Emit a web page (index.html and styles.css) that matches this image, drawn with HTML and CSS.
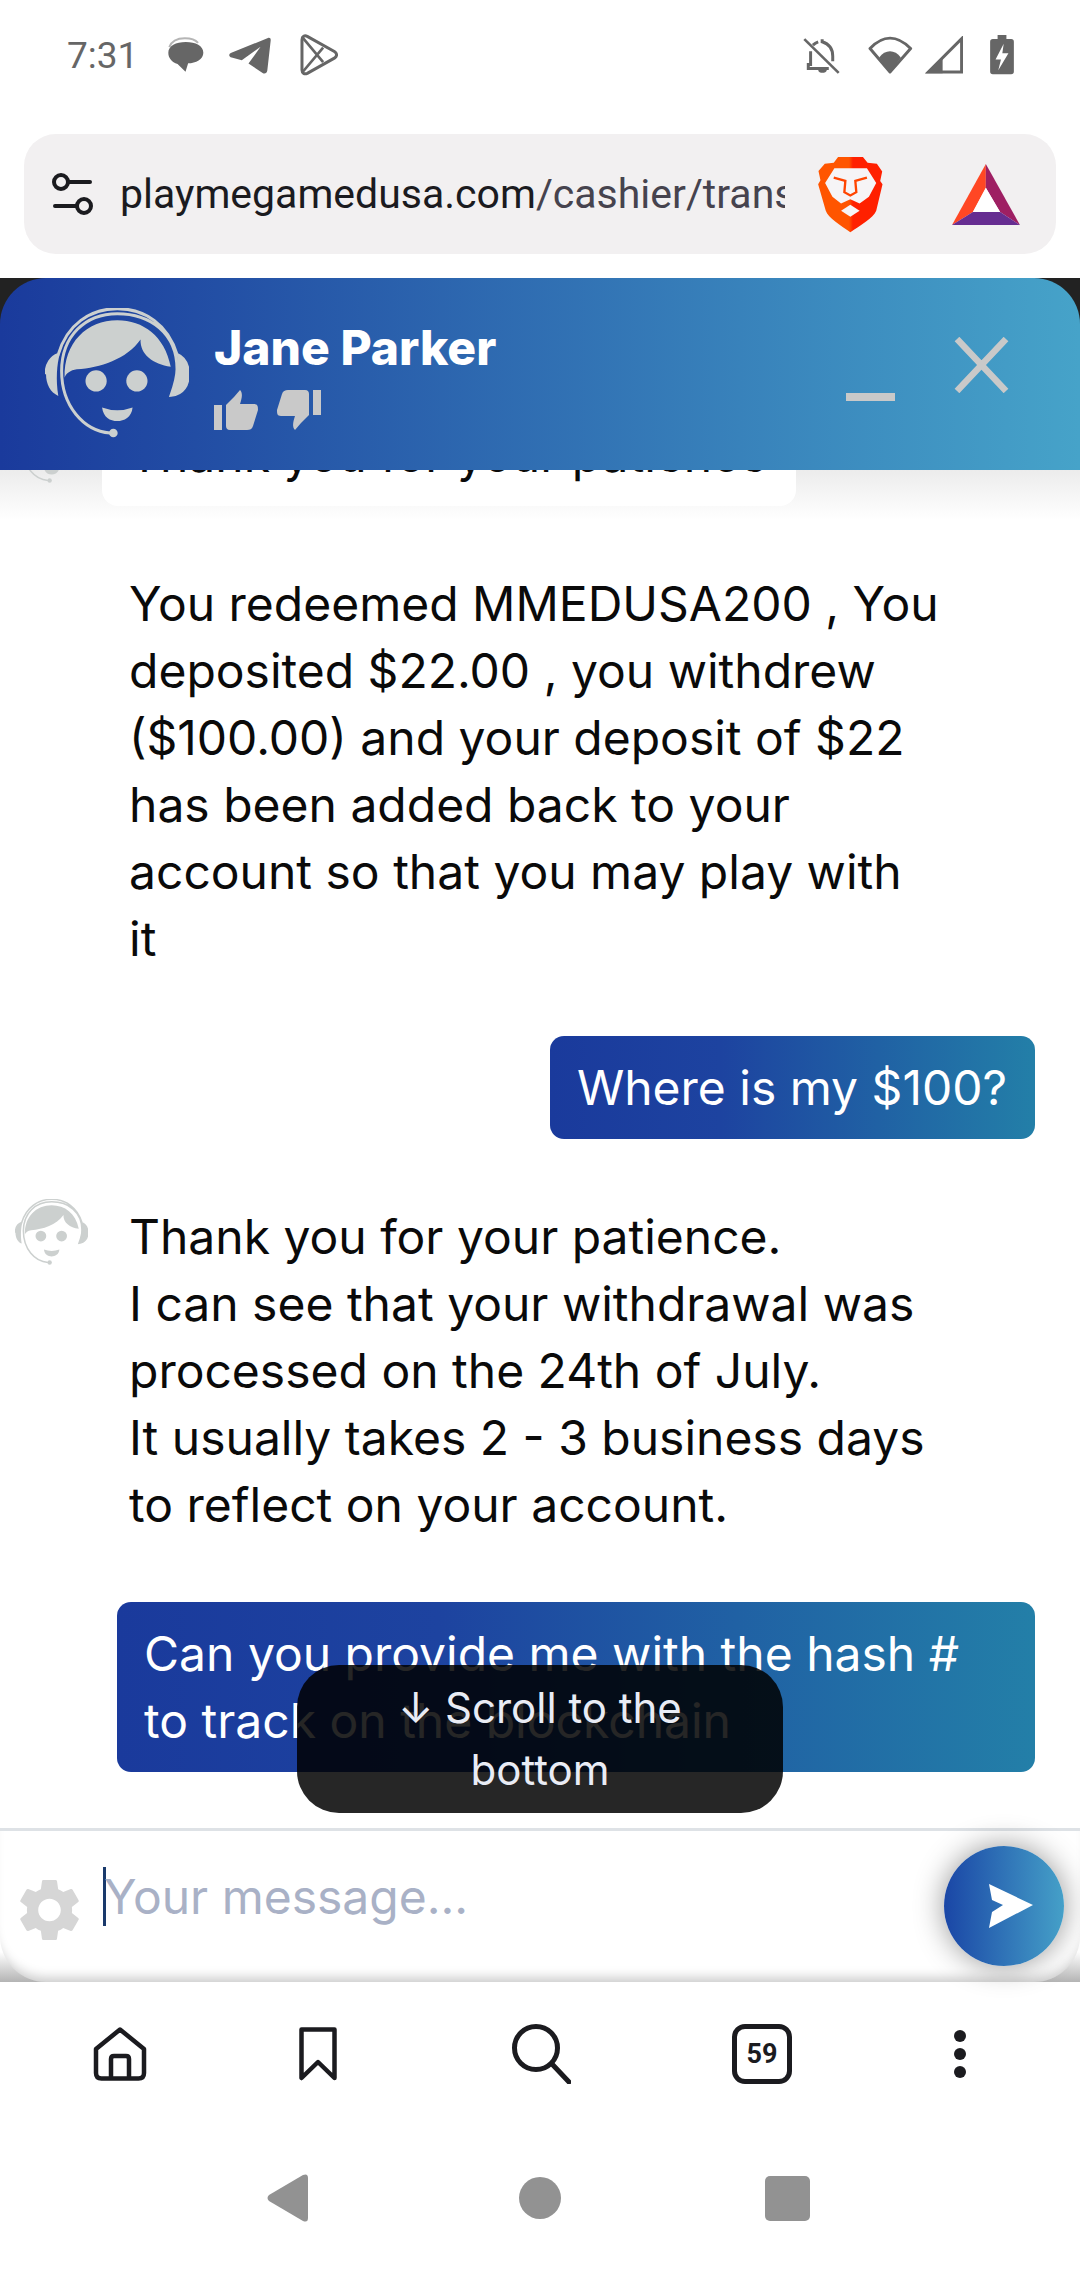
FILE: index.html
```html
<!DOCTYPE html>
<html lang="en">
<head>
    <meta charset="utf-8">
    <title>Live chat</title>
    <link rel="stylesheet" href="styles.css">
</head>
<body>

<svg class="defs" width="0" height="0">
    <symbol id="agent" viewBox="45 55 432 392">
        <path d="M47 255C47 225 62 203 84 195C110 105 180 57 262 57C345 57 415 105 442 195C465 205 476 228 476 255C476 285 462 315 424 318C436 285 442 265 442 240C442 130 360 72 262 72C165 72 94 140 94 245C94 350 160 425 240 432" fill="none" stroke="currentColor" stroke-width="9"/>
        <path d="M47 255C47 225 62 203 88 195C80 225 76 270 84 320C60 310 47 285 47 255Z" fill="currentColor"/>
        <path d="M442 195C465 205 476 228 476 255C476 285 462 315 424 318C438 280 444 235 442 195Z" fill="currentColor"/>
        <path d="M103 265C100 160 170 92 262 92C340 92 405 140 423 232C370 225 330 195 332 150C290 210 210 235 140 240C120 243 108 252 103 265Z" fill="currentColor"/>
        <circle cx="198" cy="275" r="32" fill="currentColor"/>
        <circle cx="321" cy="275" r="32" fill="currentColor"/>
        <path d="M216 355Q262 372 308 355C305 385 282 396 262 396C240 396 220 385 216 355Z" fill="currentColor"/>
        <circle cx="250" cy="432" r="13" fill="currentColor"/>
    </symbol>
</svg>

<div class="statusbar">
    <span class="clock">7:31</span>
    <svg class="st-chat" viewBox="378 55 112 108"><path d="M385 85C392 66 412 58 432 58C448 58 462 60 472 72" fill="none" stroke="#b5b5b5" stroke-width="6"/><path d="M435 70C465 70 488 82 488 102C488 122 465 134 442 134L434 160L410 136C392 130 382 118 382 102C382 82 405 70 435 70Z" fill="#666"/></svg>
    <svg class="st-tele" viewBox="568 55 125 110"><path d="M684 58C690 56 693 60 692 66L682 155C681 163 674 166 668 162L626 134L662 84L606 124L576 116C567 113 566 106 575 102Z" fill="#666"/></svg>
    <svg class="st-play" viewBox="780 42 115 125"><path d="M786 58C786 48 794 44 802 48L884 94C893 100 893 108 884 114L802 160C794 164 786 160 786 150Z" fill="none" stroke="#666" stroke-width="9" stroke-linejoin="round"/><path d="M788 52L850 126M788 156L850 82" fill="none" stroke="#666" stroke-width="8"/></svg>
    <div class="status-right">
        <svg class="st-bell" viewBox="72 50 112 112"><path d="M95 95V135H88V147H150M130 58V66C150 72 162 88 162 110V125M118 66C112 68 106 72 102 76" fill="none" stroke="#666" stroke-width="9"/><path d="M118 150H144C144 158 136 160 131 160C125 160 118 158 118 150Z" fill="#666"/><path d="M76 58L180 160" stroke="#666" stroke-width="8"/></svg>
        <svg class="st-wifi" viewBox="262 44 138 116"><path d="M270 82C310 40 352 40 394 82L331 154Z" fill="none" stroke="#666" stroke-width="9" stroke-linejoin="round"/><path d="M298 110C316 84 346 84 364 110L331 156Z" fill="#666"/></svg>
        <svg class="st-sig" viewBox="438 48 112 112"><path d="M546 56V154H448Z" fill="none" stroke="#666" stroke-width="9"/><path d="M490 112V158H440Z" fill="#666"/></svg>
        <svg class="st-batt" viewBox="632 44 70 118"><path d="M654 44H680V56H694Q702 56 702 64V152Q702 160 694 160H640Q632 160 632 152V64Q632 56 640 56H654Z" fill="#666"/><path d="M672 70L648 116H664L656 148L686 98H668Z" fill="#fff"/></svg>
    </div>
</div>

<div class="urlbar">
    <svg class="tune" viewBox="0 0 45 42"><circle cx="11" cy="9" r="7" fill="none" stroke="#1b1b1f" stroke-width="4"/><path d="M18 9H40M5 33H27" stroke="#1b1b1f" stroke-width="4" stroke-linecap="round"/><circle cx="34" cy="33" r="7" fill="none" stroke="#1b1b1f" stroke-width="4"/></svg>
    <div class="url"><span class="host">playmegamedusa.com</span>/cashier/trans</div>
    <svg class="brave" viewBox="115 75 195 232">
        <defs><linearGradient id="bv"><stop offset=".48" stop-color="#ff5500"/><stop offset=".54" stop-color="#ff2000"/></linearGradient></defs>
        <path d="M175 78L250 78L264 95L292 98L308 122L302 150L309 160L290 240C282 262 240 285 212 305C185 285 145 262 138 240L115 160L122 148L116 120L135 98L162 95Z" fill="url(#bv)"/>
        <path d="M136 156L164 112H262L290 156L268 198L240 218L212 205L184 218L158 198Z" fill="#f6f4f6"/>
        <path d="M162 140L197 150L194 184L212 194L230 184L227 150L262 140" fill="none" stroke="#ff4400" stroke-width="7"/>
        <path d="M184 240L212 222L240 240L212 258Z" fill="#f6f4f6"/>
    </svg>
    <svg class="bat" viewBox="515 98 205 184">
        <path d="M617 98L515 282L578 243L617 170Z" fill="#ff4724"/>
        <path d="M617 98L720 282L660 243L617 170Z" fill="#9e1f63"/>
        <path d="M578 243H660L720 282H515Z" fill="#662d91"/>
        <path d="M617 170L660 243H578Z" fill="#fff"/>
    </svg>
</div>

<div class="widget">
    <div class="chat-head">
        <svg class="head-agent"><use href="#agent"/></svg>
        <div class="agent-info">
            <div class="agent-name">Jane Parker</div>
            <div class="rating">
                <svg class="thumb" viewBox="0 0 44 40"><path d="M0 15H8V40H0ZM12 15L20 7L26 0C29 3 28 8 26 14H40C44 14 44 17 44 20L39 36C38 39 36 40 33 40H16C13 40 12 38 12 36Z" fill="#c9c9c9"/></svg>
                <svg class="thumb" viewBox="0 0 44 40"><path d="M44 25H36V0H44ZM32 25L24 33L18 40C15 37 16 32 18 26H4C0 26 0 23 0 20L5 4C6 1 8 0 11 0H28C31 0 32 2 32 4Z" fill="#c9c9c9"/></svg>
            </div>
        </div>
        <div class="head-btns">
            <span class="btn-min"></span>
            <svg class="btn-close" viewBox="0 0 55 56"><path d="M3 2L52 54M52 2L3 54" stroke="#c9c9c9" stroke-width="6.5"/></svg>
        </div>
    </div>

    <div class="messages">
        <div class="msg-list">
            <div class="row">
                <svg class="avatar"><use href="#agent"/></svg>
                <div class="bubble">Thank you for your patience</div>
            </div>
            <div class="row">
                <div class="avatar-gap"></div>
                <div class="bubble">You redeemed MMEDUSA200 , You deposited $22.00 , you withdrew ($100.00) and your deposit of $22 has been added back to your account so that you may play with it</div>
            </div>
            <div class="row sent">
                <div class="bubble">Where is my $100?</div>
            </div>
            <div class="row">
                <svg class="avatar"><use href="#agent"/></svg>
                <div class="bubble">Thank you for your patience.<br>I can see that your withdrawal was processed on the 24th of July.<br>It usually takes 2 - 3 business days to reflect on your account.</div>
            </div>
            <div class="row sent">
                <div class="bubble">Can you provide me with the hash # to track on the blockchain</div>
            </div>
        </div>
        <div class="scroll-btn">↓ Scroll to the bottom</div>
    </div>

    <div class="composer">
        <svg class="gear" viewBox="2.5 1.8 19 20.4"><path d="M19.14 12.94c.04-.3.06-.61.06-.94 0-.32-.02-.64-.07-.94l2.03-1.58a.49.49 0 0 0 .12-.61l-1.92-3.32a.488.488 0 0 0-.59-.22l-2.39.96c-.5-.38-1.03-.7-1.62-.94l-.36-2.54a.484.484 0 0 0-.48-.41h-3.84c-.24 0-.43.17-.47.41l-.36 2.54c-.59.24-1.13.57-1.62.94l-2.39-.96c-.22-.08-.47 0-.59.22L2.74 8.87c-.12.21-.08.47.12.61l2.03 1.58c-.05.3-.09.63-.09.94s.02.64.07.94l-2.03 1.58a.49.49 0 0 0-.12.61l1.92 3.32c.12.22.37.29.59.22l2.39-.96c.5.38 1.03.7 1.62.94l.36 2.54c.05.24.24.41.48.41h3.84c.24 0 .44-.17.47-.41l.36-2.54c.59-.24 1.13-.56 1.62-.94l2.39.96c.22.08.47 0 .59-.22l1.92-3.32c.12-.22.07-.47-.12-.61l-2.01-1.58zM12 15.6c-1.98 0-3.6-1.62-3.6-3.6s1.62-3.6 3.6-3.6 3.6 1.62 3.6 3.6-1.62 3.6-3.6 3.6z" fill="#d6d6d6"/></svg>
        <div class="placeholder">Your message...</div>
        <div class="send">
            <svg viewBox="0 0 44 44"><path d="M0 0L44 21L0 44L3 28L14 21L3 16Z" fill="#fff"/></svg>
        </div>
    </div>
</div>

<div class="toolbar">
    <svg class="tb-home" viewBox="0 0 54 54"><path d="M27 2.5L51 22V46Q51 51.500 45.500 51.500H8.500Q3 51.500 3 46V22ZM18 51V32Q18 29 21 29H33Q36 29 36 32V51" fill="none" stroke="#1b1b1f" stroke-width="4.500" stroke-linejoin="round"/></svg>
    <svg class="tb-mark" viewBox="0 0 38 54"><path d="M2.500 2.500H35.500V51L19 35L2.500 51Z" fill="none" stroke="#1b1b1f" stroke-width="4.500" stroke-linejoin="round"/></svg>
    <svg class="tb-search" viewBox="0 0 59 60"><circle cx="24" cy="24" r="21.500" fill="none" stroke="#1b1b1f" stroke-width="5"/><path d="M40 40L57 58" stroke="#1b1b1f" stroke-width="5" stroke-linecap="round"/></svg>
    <div class="tb-tabs">59</div>
    <svg class="tb-dots" viewBox="0 0 12 48"><circle cx="6" cy="6" r="6" fill="#1b1b1f"/><circle cx="6" cy="24" r="6" fill="#1b1b1f"/><circle cx="6" cy="42" r="6" fill="#1b1b1f"/></svg>
</div>

<div class="sysnav">
    <svg class="sys-back" viewBox="0 0 42 48"><path d="M37 1L3 21Q0 24 3 27L37 47Q42 49 42 44V4Q42 -1 37 1Z" fill="#929292"/></svg>
    <span class="sys-home"></span>
    <span class="sys-recent"></span>
</div>

</body>
</html>
```
FILE: styles.css
```css
html, body {
    margin: 0;
    padding: 0;
}
body {
    width: 1080px;
    height: 2270px;
    overflow: hidden;
    background: #fff;
    font-family: Inter, "Liberation Sans", sans-serif;
    color: #0a0a0a;
}
svg {
    display: block;
    flex: none;
}
.defs {
    position: absolute;
}

/* Android status bar
---------------------------------------------------------------- */
.statusbar {
    display: flex;
    align-items: center;
    height: 110px;
    padding: 0 66px 0 67px;
    box-sizing: border-box;
}
.clock {
    font: 37px Roboto, sans-serif;
    color: #666;
    width: 100px;
}
.st-chat { width: 37px; height: 36px; }
.st-tele { width: 42px; height: 37px; margin-left: 25px; }
.st-play { width: 38px; height: 42px; margin-left: 29px; }
.status-right {
    display: flex;
    align-items: center;
    margin-left: auto;
}
.st-bell { width: 37px; height: 38px; }
.st-wifi { width: 46px; height: 38px; margin-left: 27px; }
.st-sig { width: 38px; height: 38px; margin-left: 12px; }
.st-batt { width: 24px; height: 40px; margin-left: 27px; }

/* Browser address bar
---------------------------------------------------------------- */
.urlbar {
    display: flex;
    align-items: center;
    height: 120px;
    margin: 24px 24px;
    background: #f2f0f1;
    border-radius: 32px;
}
.tune {
    width: 45px;
    height: 42px;
    margin-left: 26px;
}
.url {
    width: 665px;
    margin-left: 25px;
    overflow: hidden;
    white-space: nowrap;
    font: 41px Roboto, sans-serif;
    color: #46434e;
}
.host {
    color: #1b1b1f;
}
.brave {
    width: 65px;
    height: 77px;
    margin-left: 33px;
}
.bat {
    width: 68px;
    height: 61px;
    margin-left: 69px;
}

/* Chat widget
---------------------------------------------------------------- */
.widget {
    height: 1704px;
    background: linear-gradient(#222 60px, #fff 60px, #fff calc(100% - 30px), #b4b4b4);
}
.chat-head {
    position: relative;
    z-index: 2;
    display: flex;
    height: 192px;
    box-sizing: border-box;
    padding: 30px 0 0 45px;
    color: #ccd0cf;
    background: linear-gradient(to right, #1a3a9c, #46a3c9);
    border-radius: 46px 46px 0 0;
}
.head-agent {
    width: 144px;
    height: 130px;
}
.agent-info {
    margin-left: 25px;
}
.agent-name {
    font-size: 48px;
    font-weight: 800;
    line-height: 56px;
    margin-top: 12px;
    color: #fff;
}
.rating {
    display: flex;
    gap: 19px;
    margin-top: 14px;
}
.thumb {
    width: 44px;
    height: 40px;
}
.head-btns {
    display: flex;
    align-items: flex-start;
    margin-left: auto;
    padding-right: 71px;
}
.btn-min {
    width: 49px;
    height: 8px;
    margin-top: 85px;
    background: #c9c9c9;
}
.btn-close {
    width: 55px;
    height: 56px;
    margin: 29px 0 0 59px;
}

.messages {
    position: relative;
    height: 1358px;
    overflow: hidden;
    display: flex;
    flex-direction: column;
    justify-content: flex-end;
    background: #fff linear-gradient(#ececec, #fff 50px) no-repeat;
}
.msg-list {
    display: flex;
    flex-direction: column;
    gap: 46px;
    padding-bottom: 56px;
}
.row {
    display: flex;
    align-items: flex-start;
    padding-left: 15px;
}
.avatar {
    width: 73px;
    height: 66px;
    margin: 14px 14px 0 0;
    color: #ccd0cf;
}
.avatar-gap {
    width: 87px;
    flex: none;
}
.bubble {
    max-width: 868px;
    box-sizing: border-box;
    padding: 18px 28px 18px 27px;
    font-size: 48px;
    line-height: 67px;
    background: #fff;
    border-radius: 16px;
}
.row.sent {
    justify-content: flex-end;
    padding: 0 45px 0 0;
}
.row.sent .bubble {
    max-width: 918px;
    color: #fff;
    background: linear-gradient(to right, #1a3a9c, #1d43a0 35%, #237fa8);
    border-radius: 14px;
}
.scroll-btn {
    position: absolute;
    left: 297px;
    bottom: 15px;
    width: 486px;
    box-sizing: border-box;
    padding: 12px 66px;
    font-size: 42px;
    line-height: 62px;
    text-align: center;
    color: #e9ecf5;
    background: rgba(0, 0, 0, .85);
    border-radius: 42px;
}

.composer {
    position: relative;
    display: flex;
    align-items: flex-start;
    height: 154px;
    box-sizing: border-box;
    border-top: 3px solid #dee2e6;
    background: #fff;
    box-shadow: inset 0 -12px 12px -8px rgba(0, 0, 0, .22);
    border-radius: 0 0 46px 46px;
}
.gear {
    width: 61px;
    height: 64px;
    margin: 47px 0 0 19px;
}
.placeholder {
    margin: 36px 0 0 23px;
    height: 59px;
    line-height: 59px;
    text-indent: -2px;
    border-left: 3px solid #1a3a6c;
    font-size: 48px;
    color: #a9b1c6;
}
.send {
    display: flex;
    align-items: center;
    justify-content: center;
    width: 120px;
    height: 120px;
    margin: 15px 16px 0 auto;
    border-radius: 50%;
    background: linear-gradient(to right, #1a46a6, #45a0c8);
    box-shadow: 0 0 30px rgba(0, 0, 0, .42);
}
.send svg {
    width: 44px;
    height: 44px;
    margin-left: 14px;
}

/* Browser toolbar and Android navigation
---------------------------------------------------------------- */
.toolbar {
    display: flex;
    align-items: center;
    height: 144px;
    padding-left: 93px;
}
.tb-home { width: 54px; height: 54px; }
.tb-mark { width: 38px; height: 54px; margin-left: 152px; }
.tb-search { width: 59px; height: 60px; margin-left: 175px; }
.tb-tabs {
    width: 60px;
    height: 60px;
    box-sizing: border-box;
    margin-left: 161px;
    border: 5px solid #1b1b1f;
    border-radius: 13px;
    font: 700 27px/50px Roboto, sans-serif;
    text-align: center;
    color: #1b1b1f;
}
.tb-dots { width: 12px; height: 48px; margin-left: 162px; }

.sysnav {
    display: flex;
    align-items: center;
    height: 144px;
    padding-left: 266px;
}
.sys-back { width: 42px; height: 48px; }
.sys-home {
    width: 42px;
    height: 42px;
    margin-left: 211px;
    border-radius: 50%;
    background: #929292;
}
.sys-recent {
    width: 45px;
    height: 45px;
    margin-left: 204px;
    border-radius: 5px;
    background: #929292;
}
```
